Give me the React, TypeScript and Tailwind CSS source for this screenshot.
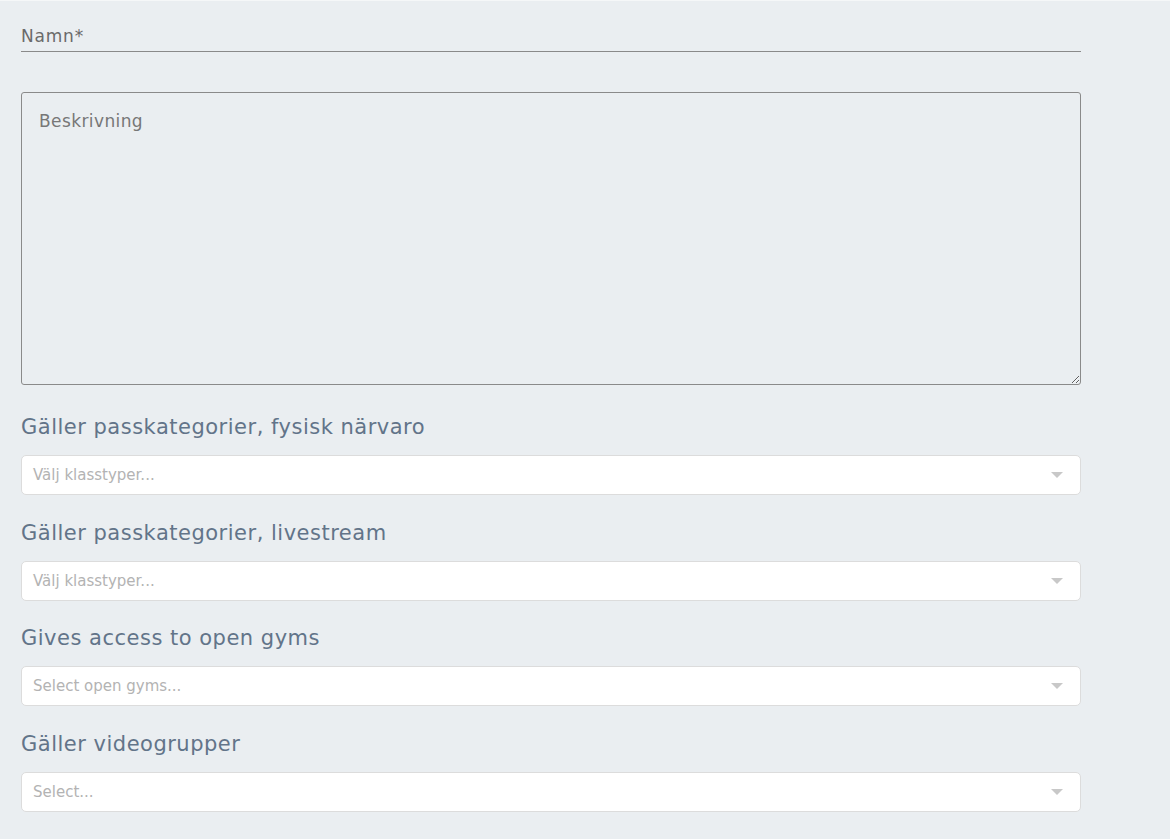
import React from "react";

const font = { fontFamily: '"DejaVu Sans", "Open Sans", sans-serif' };

function SelectBox({ placeholder }: { placeholder: string }) {
  return (
    <div className="flex h-[40px] w-full items-center justify-between rounded-[5px] border border-[#dcdcdc] bg-white pl-[11px] pr-[17px]">
      <span className="text-[15px] text-[#b3b3b3]">{placeholder}</span>
      <svg width="12" height="7" viewBox="0 0 12 7">
        <path d="M0 0 L12 0 L6 6 Z" fill="#c8c8c8" />
      </svg>
    </div>
  );
}

function Field({ label, placeholder, className = "" }: { label: string; placeholder: string; className?: string }) {
  return (
    <div className={"flex flex-col " + className}>
      <div className="h-[28px] text-[21px] leading-[28px] tracking-[0.5px] text-[#627489]">{label}</div>
      <div className="mt-[14px]">
        <SelectBox placeholder={placeholder} />
      </div>
    </div>
  );
}

export default function App() {
  return (
    <div className="min-h-screen border-t border-[#f5f7f8] bg-[#eaeef1]" style={font}>
      <div className="ml-[21px] w-[1060px]">
        {/* name */}
        <div className="border-b border-[#8a8a8a] pt-[24px] pb-[2px]">
          <span className="text-[17px] leading-[22px] tracking-[0.8px] text-[#6a6a6a]">Namn*</span>
        </div>

        {/* description */}
        <textarea
          placeholder="Beskrivning"
          className="mt-[40px] block h-[293px] w-full rounded-[3px] border border-[#8a8a8a] bg-transparent px-[17px] pt-[17px] text-[17px] leading-[22px] tracking-[0.4px] text-[#555] outline-none placeholder:text-[#777]"
          style={font}
        />

        <div className="mt-[28px] flex flex-col">
          <Field label="Gäller passkategorier, fysisk närvaro" placeholder="Välj klasstyper..." />
          <Field className="mt-[24px]" label="Gäller passkategorier, livestream" placeholder="Välj klasstyper..." />
          <Field className="mt-[23px]" label="Gives access to open gyms" placeholder="Select open gyms..." />
          <Field className="mt-[24px]" label="Gäller videogrupper" placeholder="Select..." />
        </div>
      </div>
    </div>
  );
}
